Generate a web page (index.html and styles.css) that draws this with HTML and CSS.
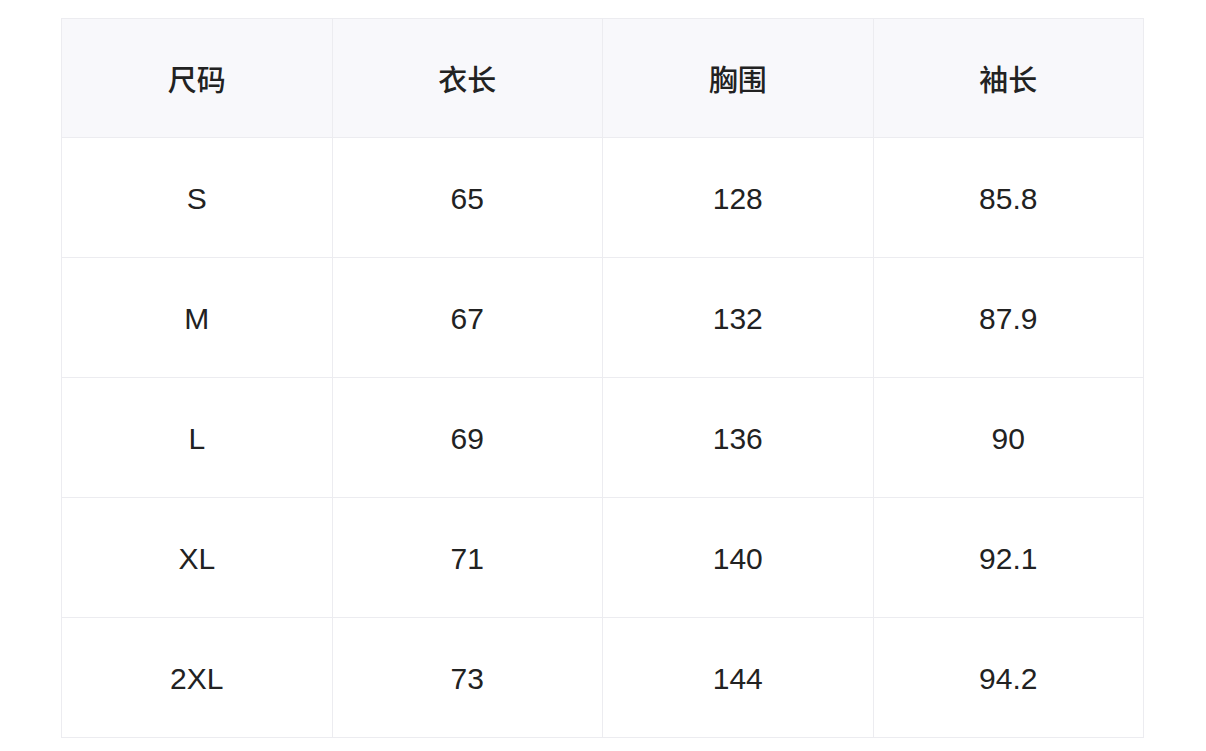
FILE: index.html
```html
<!DOCTYPE html>
<html lang="zh">
<head>
<meta charset="utf-8">
<link rel="stylesheet" href="styles.css">
</head>
<body>
<div class="wrap">
<table class="size-table">
<thead>
<tr><th>尺码</th><th>衣长</th><th>胸围</th><th>袖长</th></tr>
</thead>
<tbody>
<tr><td>S</td><td>65</td><td>128</td><td>85.8</td></tr>
<tr><td>M</td><td>67</td><td>132</td><td>87.9</td></tr>
<tr><td>L</td><td>69</td><td>136</td><td>90</td></tr>
<tr><td>XL</td><td>71</td><td>140</td><td>92.1</td></tr>
<tr><td>2XL</td><td>73</td><td>144</td><td>94.2</td></tr>
</tbody>
</table>
</div>
</body>
</html>
```

FILE: styles.css
```css
html, body {
  margin: 0;
  padding: 0;
  background: #ffffff;
}
.wrap {
  padding: 18px 0 0 61px;
}
.size-table {
  width: 1083px;
  border-collapse: collapse;
  table-layout: fixed;
  font-family: "Liberation Sans", "Noto Sans CJK SC", sans-serif;
  color: #222222;
}
.size-table th,
.size-table td {
  border: 1px solid #ececf0;
  text-align: center;
  vertical-align: middle;
  padding: 0;
}
.size-table th {
  height: 118px;
  background: #f8f8fb;
  font-family: "Noto Sans CJK SC", sans-serif;
  font-size: 29px;
  font-weight: 500;
}
.size-table td {
  height: 117px;
  font-size: 30px;
  font-weight: 400;
  padding-top: 2px;
}
```
